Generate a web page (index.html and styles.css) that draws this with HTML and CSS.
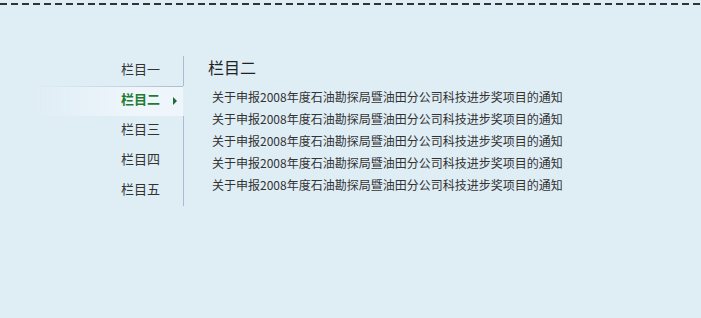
FILE: index.html
```html
<!DOCTYPE html>
<html lang="zh-CN">
<head>
    <meta charset="UTF-8">
    <meta name="viewport" content="width=device-width, initial-scale=1.0">
    <title>栏目二</title>
    <link rel="stylesheet" href="styles.css">
</head>
<body>
    <div class="topline"></div>
    <div class="main">
        <ul class="side">
            <li class="item"><a href="#">栏目一</a></li>
            <li class="item active"><a href="#">栏目二</a><span class="arrow"></span></li>
            <li class="item"><a href="#">栏目三</a></li>
            <li class="item"><a href="#">栏目四</a></li>
            <li class="item"><a href="#">栏目五</a></li>
        </ul>
        <div class="content">
            <h2 class="title">栏目二</h2>
            <ul class="news">
                <li>关于申报2008年度石油勘探局暨油田分公司科技进步奖项目的通知</li>
                <li>关于申报2008年度石油勘探局暨油田分公司科技进步奖项目的通知</li>
                <li>关于申报2008年度石油勘探局暨油田分公司科技进步奖项目的通知</li>
                <li>关于申报2008年度石油勘探局暨油田分公司科技进步奖项目的通知</li>
                <li>关于申报2008年度石油勘探局暨油田分公司科技进步奖项目的通知</li>
            </ul>
        </div>
    </div>
</body>
</html>
```

FILE: styles.css
```css
body {
    margin: 0;
    background-color: #dfedf5;
    font-family: "Noto Sans CJK SC", "Noto Sans", sans-serif;
    color: #333;
}
.topline {
    margin-top: 3px;
    height: 2px;
    background: repeating-linear-gradient(to right, #333 0 7px, transparent 7px 11px);
}
.main {
    display: flex;
    margin-top: 51px;
}
.side {
    list-style: none;
    margin: 0 0 0 32px;
    padding: 0;
    width: 152px;
}
.item {
    position: relative;
    height: 30px;
    line-height: 26px;
    text-align: right;
    padding-right: 23px;
    border-right: 1px solid #a9bdd0;
    box-sizing: border-box;
    font-size: 13px;
}
.item a {
    color: #333;
    text-decoration: none;
}
.item.active {
    border-right-color: transparent;
    background:
        linear-gradient(to right, rgba(169, 189, 208, 0), #a9bdd0) top / 100% 1px no-repeat,
        linear-gradient(to right, rgba(240, 248, 252, 0), #eef6fb 70%);
}
.item.active a {
    color: #1f7a32;
    font-weight: bold;
}
.arrow {
    position: absolute;
    right: 6px;
    top: 11px;
    width: 0;
    height: 0;
    border-top: 4px solid transparent;
    border-bottom: 4px solid transparent;
    border-left: 4px solid #1d6b35;
}
.content {
    margin-left: 24px;
}
.title {
    margin: 0;
    font-size: 16px;
    font-weight: normal;
    line-height: 22px;
    color: #222;
}
.news {
    list-style: none;
    margin: 8px 0 0;
    padding: 0 0 0 4px;
}
.news li {
    font-size: 12px;
    line-height: 22px;
    color: #333;
}
```
